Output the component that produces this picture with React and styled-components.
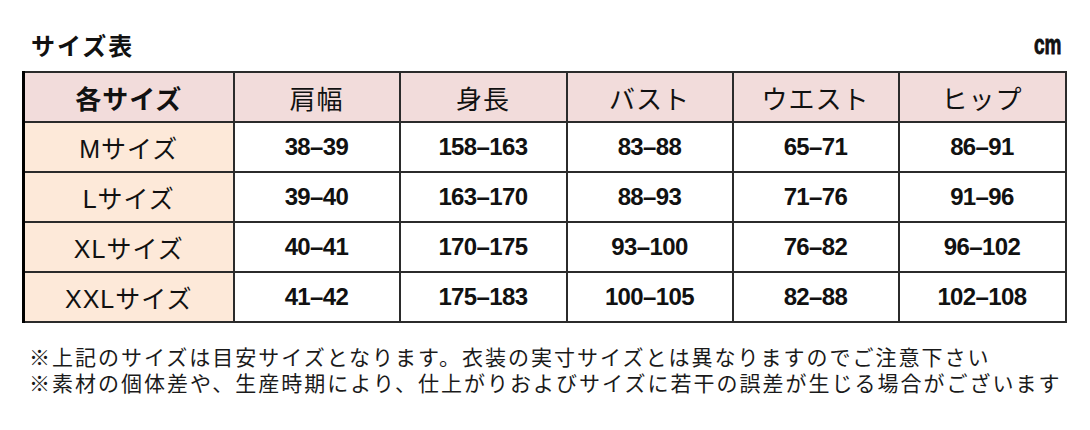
import React from "react";
import styled, { createGlobalStyle } from "styled-components";

const GlobalStyle = createGlobalStyle`
  body {
    margin: 0;
    background: #ffffff;
    font-family: "Liberation Sans", "Noto Sans CJK JP", sans-serif;
    color: #111;
  }
`;

const Page = styled.div`
  width: 1090px;
  height: 430px;
  padding: 32px 0 0 22px;
  box-sizing: border-box;
  overflow: hidden;
`;

//タイトル行

const TitleRow = styled.div`
  display: flex;
  justify-content: space-between;
  align-items: center;
  width: 1044px;
  height: 26px;
  margin-bottom: 13px;
`;

const Title = styled.h1`
  margin: 0 0 0 9px;
  font-family: "Noto Sans CJK JP", sans-serif;
  font-size: 24px;
  line-height: 26px;
  font-weight: 700;
  letter-spacing: 2px;
`;

const Unit = styled.span`
  display: inline-block;
  margin-right: 5px;
  font-family: "Liberation Sans", sans-serif;
  font-size: 28px;
  line-height: 26px;
  font-weight: 700;
  -webkit-text-stroke: 0.9px #111;
  transform: scaleX(0.68);
  transform-origin: right center;
`;

//テーブル

const Table = styled.table`
  border-collapse: collapse;
  table-layout: fixed;
  border-left: 3px solid #000;
  border-top: 2px solid #000;
  border-right: 2px solid #000;
  border-bottom: 2px solid #000;
`;

const Th = styled.th`
  height: 48px;
  padding: 0;
  background: #f2dcdb;
  border: 2px solid #2b2b2b;
  font-family: "Noto Sans CJK JP", sans-serif;
  font-size: 26px;
  font-weight: ${(p) => (p.$bold ? 700 : 400)};
  letter-spacing: 1px;
  text-align: center;
  vertical-align: middle;
`;

const SizeCell = styled.td`
  height: 48px;
  padding: 0;
  background: #fde9d9;
  border: 2px solid #2b2b2b;
  font-size: 25px;
  letter-spacing: 1px;
  text-align: center;
  vertical-align: middle;
`;

const ValueCell = styled.td`
  height: 48px;
  padding: 0;
  background: #ffffff;
  border: 2px solid #2b2b2b;
  font-size: 24px;
  font-weight: 700;
  letter-spacing: -0.6px;
  text-align: center;
  vertical-align: middle;
`;

//注意書き

const Notes = styled.div`
  margin-top: 20px;
  margin-left: 7px;
  font-family: "Noto Sans CJK JP", sans-serif;
  font-size: 21px;
  line-height: 26px;
  letter-spacing: 2px;
  color: #1a1a1a;
  white-space: nowrap;
`;

const widths = [210, 166, 167, 166, 166, 167];

const headers = ["各サイズ", "肩幅", "身長", "バスト", "ウエスト", "ヒップ"];

const rows = [
  ["Mサイズ", "38–39", "158–163", "83–88", "65–71", "86–91"],
  ["Lサイズ", "39–40", "163–170", "88–93", "71–76", "91–96"],
  ["XLサイズ", "40–41", "170–175", "93–100", "76–82", "96–102"],
  ["XXLサイズ", "41–42", "175–183", "100–105", "82–88", "102–108"],
];

const App = () => {
  return (
    <Page>
      <GlobalStyle />
      <TitleRow>
        <Title>サイズ表</Title>
        <Unit>cm</Unit>
      </TitleRow>

      <Table>
        <colgroup>
          {widths.map((w, i) => (
            <col key={i} style={{ width: w }} />
          ))}
        </colgroup>
        <thead>
          <tr>
            {headers.map((h, i) => (
              <Th key={h} $bold={i === 0}>
                {h}
              </Th>
            ))}
          </tr>
        </thead>
        <tbody>
          {rows.map((r) => (
            <tr key={r[0]}>
              <SizeCell>{r[0]}</SizeCell>
              {r.slice(1).map((v, i) => (
                <ValueCell key={i}>{v}</ValueCell>
              ))}
            </tr>
          ))}
        </tbody>
      </Table>

      <Notes>
        <div>※上記のサイズは目安サイズとなります。衣装の実寸サイズとは異なりますのでご注意下さい</div>
        <div>※素材の個体差や、生産時期により、仕上がりおよびサイズに若干の誤差が生じる場合がございます</div>
      </Notes>
    </Page>
  );
};

export default App;
